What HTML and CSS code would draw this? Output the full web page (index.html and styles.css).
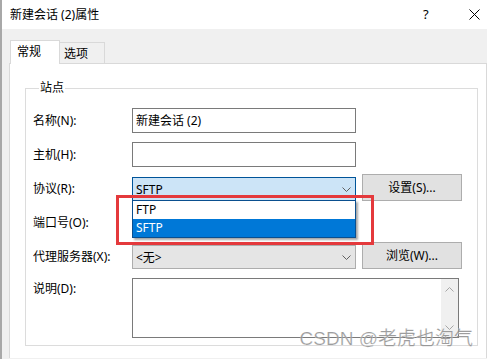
FILE: index.html
```html
<!DOCTYPE html>
<html lang="zh-CN">
<head>
    <meta charset="UTF-8">
    <meta name="viewport" content="width=device-width, initial-scale=1.0">
    <title>新建会话 (2)属性</title>
    <link rel="stylesheet" href="styles.css">
</head>
<body>
    <div class="window">
        <div class="titlebar">
            <span class="title">新建会话 (2)属性</span>
            <span class="help">?</span>
            <svg class="close" width="11" height="11" viewBox="0 0 11 11">
                <path d="M0.5 0.5 L10.5 10.5 M10.5 0.5 L0.5 10.5" stroke="#000" stroke-width="1" fill="none"/>
            </svg>
        </div>

        <div class="tabs">
            <div class="tab active">常规</div>
            <div class="tab">选项</div>
        </div>

        <div class="panel">
            <fieldset class="group">
                <legend>站点</legend>

                <div class="row">
                    <label>名称(N):</label>
                    <div class="field">新建会话 (2)</div>
                </div>
                <div class="row">
                    <label>主机(H):</label>
                    <div class="field"></div>
                </div>
                <div class="row">
                    <label>协议(R):</label>
                    <div class="combo open">
                        <span>SFTP</span>
                        <svg class="chev" width="9" height="5" viewBox="0 0 9 5">
                            <path d="M0.5 0.5 L4.5 4.5 L8.5 0.5" stroke="#606060" fill="none"/>
                        </svg>
                        <ul class="droplist">
                            <li>FTP</li>
                            <li class="selected">SFTP</li>
                        </ul>
                        <div class="mark"></div>
                    </div>
                    <button>设置(S)...</button>
                </div>
                <div class="row">
                    <label>端口号(O):</label>
                    <div class="field"></div>
                </div>
                <div class="row">
                    <label>代理服务器(X):</label>
                    <div class="combo disabled">
                        <span>&lt;无&gt;</span>
                        <svg class="chev" width="9" height="5" viewBox="0 0 9 5">
                            <path d="M0.5 0.5 L4.5 4.5 L8.5 0.5" stroke="#606060" fill="none"/>
                        </svg>
                    </div>
                    <button>浏览(W)...</button>
                </div>
                <div class="row tall">
                    <label>说明(D):</label>
                    <div class="memo">
                        <div class="scroll">
                            <svg width="9" height="5" viewBox="0 0 9 5">
                                <path d="M0.5 4.5 L4.5 0.5 L8.5 4.5" stroke="#a6a6a6" fill="none"/>
                            </svg>
                            <svg width="9" height="5" viewBox="0 0 9 5">
                                <path d="M0.5 0.5 L4.5 4.5 L8.5 0.5" stroke="#a6a6a6" fill="none"/>
                            </svg>
                        </div>
                    </div>
                </div>
            </fieldset>
        </div>
    </div>

    <div class="watermark">CSDN @老虎也淘气</div>
</body>
</html>
```

FILE: styles.css
```css
body {
    margin: 0;
    width: 487px;
    height: 359px;
    overflow: hidden;
    background: #f0f0f0;
    font-family: "Noto Sans", "Noto Sans CJK SC", sans-serif;
    font-size: 12px;
    line-height: 17px;
    color: #000;
    position: relative;
}
.window {
    border-left: 2px solid #a8a8a8;
    height: 359px;
    box-sizing: border-box;
}
.titlebar {
    height: 29px;
    background: #fff;
    display: flex;
    align-items: center;
    padding-left: 8px;
}
.title {
    flex: 1;
}
.help {
    width: 10px;
    margin-right: 36px;
    font-size: 13px;
}
.close {
    margin-right: 7px;
}

.tabs {
    display: flex;
    align-items: flex-end;
    height: 23px;
    margin-top: 11px;
    padding-left: 8px;
}
.tab {
    box-sizing: border-box;
    height: 21px;
    width: 45px;
    padding: 2px 0 0 4px;
    background: #f0f0f0;
    border: 1px solid #d9d9d9;
    border-left: none;
    border-bottom: none;
}
.tab.active {
    position: relative;
    z-index: 1;
    height: 24px;
    width: 50px;
    margin-bottom: -1px;
    padding-left: 6px;
    background: #fff;
    border-left: 1px solid #d9d9d9;
}

.panel {
    margin-left: 7px;
    height: 278px;
    background: #fff;
    border: 1px solid #d9d9d9;
    border-bottom: none;
    padding: 16px 0 0 15px;
}
.group {
    box-sizing: border-box;
    width: 453px;
    height: 266px;
    margin: 0;
    padding: 10px 0 0 7px;
    border: 1px solid #dcdcdc;
}
.group legend {
    padding: 0 1px;
    margin-left: 6px;
    line-height: 16px;
}

.row {
    display: flex;
    align-items: center;
    height: 27px;
    margin-bottom: 7px;
}
.row label {
    width: 99px;
    padding-top: 2px;
}
.field {
    box-sizing: border-box;
    align-self: flex-end;
    width: 224px;
    height: 25px;
    padding: 3px 0 0 3px;
    border: 1px solid #7a7a7a;
    background: #fff;
}
.combo {
    position: relative;
    box-sizing: border-box;
    align-self: flex-end;
    display: flex;
    align-items: center;
    width: 224px;
    height: 24px;
    padding: 0 4px 0 3px;
}
.combo span {
    flex: 1;
}
.combo.open {
    background: #cce4f7;
    border: 1px solid #005499;
}
.combo.disabled {
    background: #e5e5e5;
    border: 1px solid #adadad;
}
.droplist {
    position: absolute;
    z-index: 2;
    left: -1px;
    top: 22px;
    width: 224px;
    box-sizing: border-box;
    margin: 0;
    padding: 0;
    list-style: none;
    background: #fff;
    border: 1px solid #0a4f8f;
    box-shadow: 2px 2px 2px rgba(0, 0, 0, 0.35);
}
.droplist li {
    height: 18px;
    line-height: 18px;
    padding-left: 3px;
}
.droplist li.selected {
    background: #0078d7;
    color: #fff;
}
.mark {
    position: absolute;
    z-index: 3;
    left: -17px;
    top: 17px;
    width: 258px;
    height: 50px;
    box-sizing: border-box;
    border: 3px solid #e4393c;
}
button {
    box-sizing: border-box;
    width: 100px;
    height: 27px;
    margin-left: 6px;
    padding: 0;
    font: inherit;
    background: #e1e1e1;
    border: 1px solid #adadad;
    color: #000;
}
.row.tall {
    height: auto;
    align-items: flex-start;
    margin-bottom: 0;
}
.row.tall label {
    padding-top: 4px;
}
.memo {
    box-sizing: border-box;
    width: 327px;
    height: 60px;
    margin-top: 2px;
    border: 1px solid #7a7a7a;
    display: flex;
    justify-content: flex-end;
}
.scroll {
    width: 17px;
    background: #f0f0f0;
    display: flex;
    flex-direction: column;
    align-items: center;
    justify-content: space-between;
    padding: 8px 0 7px;
}

.watermark {
    position: absolute;
    right: 14px;
    top: 329px;
    font-size: 19px;
    line-height: 20px;
    color: rgba(140, 140, 140, 0.85);
    font-family: "Liberation Sans", "Noto Sans CJK SC", sans-serif;
    -webkit-text-stroke: 0.2px #fff;
}
```
